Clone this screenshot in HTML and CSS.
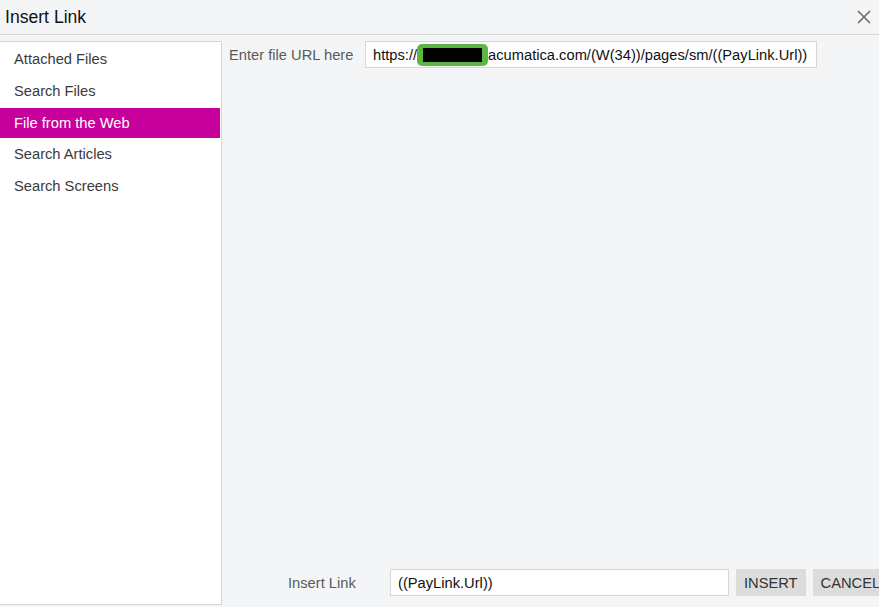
FILE: index.html
```html
<!DOCTYPE html>
<html lang="en">

<head>
    <meta charset="UTF-8">
    <title>Insert Link</title>
    <link rel="stylesheet" href="styles.css">
</head>

<body>
    <div class="dialog">
        <div class="header">
            <span class="title">Insert Link</span>
            <svg class="close" width="14" height="14" viewBox="0 0 14 14">
                <path d="M1 1 L13 13 M13 1 L1 13" stroke="#6b6b6b" stroke-width="1.6" fill="none" />
            </svg>
        </div>

        <div class="content">
            <ul class="nav">
                <li>Attached Files</li>
                <li>Search Files</li>
                <li class="active">File from the Web</li>
                <li>Search Articles</li>
                <li>Search Screens</li>
            </ul>

            <div class="main">
                <div class="row">
                    <label class="label url-label">Enter file URL here</label>
                    <div class="field url">https://<span class="redact"><span></span></span>acumatica.com/(W(34))/pages/sm/((PayLink.Url))</div>
                </div>

                <div class="row bottom">
                    <label class="label link-label">Insert Link</label>
                    <div class="field link">((PayLink.Url))</div>
                    <button class="btn">INSERT</button>
                    <button class="btn">CANCEL</button>
                </div>
            </div>
        </div>
    </div>
</body>

</html>
```

FILE: styles.css
```css
html,
body {
    margin: 0;
    padding: 0;
    overflow: hidden;
}

body {
    font-family: 'Liberation Sans', Arial, sans-serif;
    background-color: #f4f5f7;
    color: #333;
    width: 879px;
    height: 607px;
}

.header {
    height: 34px;
    border-bottom: 1px solid #d6d6d6;
    display: flex;
    align-items: center;
    justify-content: space-between;
    padding: 0 5px;
}

.header .title {
    font-size: 17.6px;
    color: #111;
}

.header .close {
    margin-right: 3px;
}

.content {
    display: flex;
    margin-top: 6px;
    height: 564px;
}

.nav {
    list-style: none;
    margin: 0;
    padding: 1px 0 0 0;
    width: 222px;
    background-color: #fff;
    border: 1px solid #d6d6d6;
    border-left: none;
    box-sizing: border-box;
    flex-shrink: 0;
}

.nav li {
    height: 32px;
    line-height: 32px;
    padding-left: 14px;
    font-size: 14.7px;
    color: #3a3a3a;
    margin-right: 1px;
}

.nav li.active {
    background-color: #c8009b;
    color: #fff;
    line-height: 30px;
    height: 30px;
    margin-top: 1px;
}

.main {
    flex: 1;
    display: flex;
    flex-direction: column;
    justify-content: space-between;
    padding: 0 0 9px 7px;
}

.row {
    display: flex;
    align-items: center;
}

.label {
    font-size: 14.7px;
    color: #5a5a5a;
    flex-shrink: 0;
}

.url-label {
    width: 136px;
}

.field {
    height: 27px;
    box-sizing: border-box;
    background-color: #fff;
    border: 1px solid #d6d6d6;
    font-size: 14.7px;
    color: #111;
    display: flex;
    align-items: center;
    padding-left: 7px;
    white-space: nowrap;
    flex-shrink: 0;
}

.url {
    width: 452px;
}

.redact {
    display: inline-block;
    width: 71px;
    height: 22px;
    background-color: #5cb644;
    border-radius: 5px;
    position: relative;
}

.redact span {
    position: absolute;
    left: 6px;
    top: 4px;
    width: 59px;
    height: 14px;
    background-color: #000;
}

.bottom .link-label {
    margin-left: 59px;
    width: 102px;
}

.link {
    width: 339px;
}

.btn {
    height: 27px;
    margin-left: 7px;
    border: none;
    background-color: #dcdcdc;
    color: #333;
    font-family: 'Liberation Sans', Arial, sans-serif;
    font-size: 14.7px;
    padding: 0 8px;
    flex-shrink: 0;
}
```
